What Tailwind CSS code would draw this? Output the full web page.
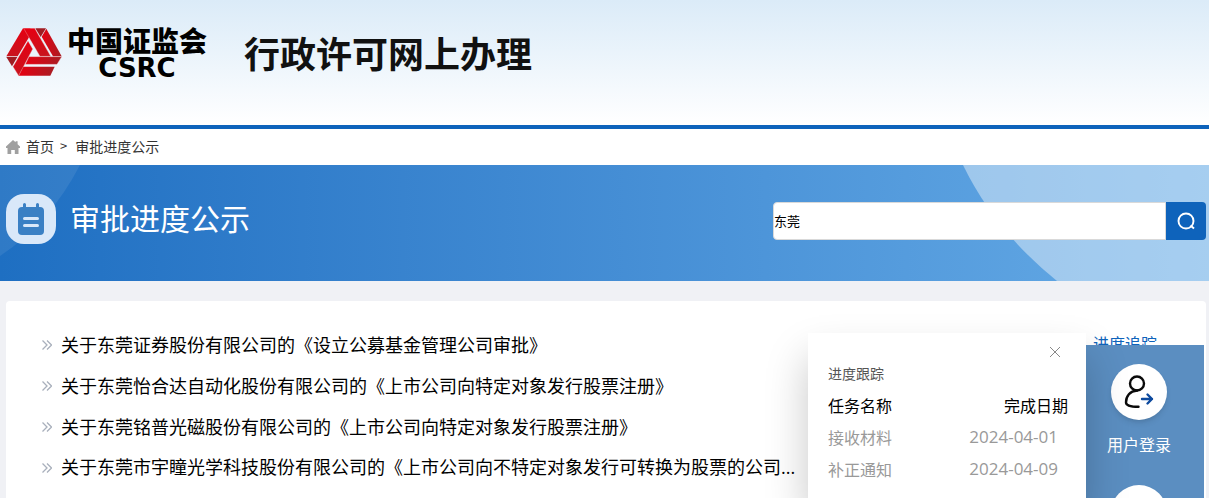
<!DOCTYPE html>
<html lang="zh-CN">
  <head>
    <meta charset="UTF-8" />
    <meta name="viewport" content="width=device-width, initial-scale=1.0" />
    <title>行政许可网上办理 - 审批进度公示</title>
    <script src="https://cdn.jsdelivr.net/npm/@tailwindcss/browser@4"></script>
  </head>
  <body class="flex h-screen flex-col overflow-hidden bg-[#f0f1f5] font-['Noto_Sans_CJK_SC',sans-serif] text-black">
    <header class="flex h-[129px] shrink-0 items-start border-b-4 border-[#0e63bb] bg-linear-to-b from-[#dbebf8] to-white pt-[22px] pl-1.5">
      <a href="#" class="flex items-center" aria-label="中国证监会 CSRC">
        <svg class="h-12 w-14" viewBox="18 36 168 144">
          <defs>
            <linearGradient id="g1" x1="0" y1="0" x2="0" y2="1">
              <stop offset="0" stop-color="#e60012" />
              <stop offset="1" stop-color="#c8141e" />
            </linearGradient>
            <linearGradient id="g2" x1="0" y1="0" x2="1" y2="0">
              <stop offset="0" stop-color="#e60012" />
              <stop offset="1" stop-color="#a81e24" />
            </linearGradient>
          </defs>
          <path d="M69 37h22v20L53 121H19z" fill="url(#g1)" />
          <path d="M19 123h33l-16 28z" fill="#a01c22" />
          <path d="M106 37h32l-16 26z" fill="#a01c22" />
          <path d="M139 38l46 83h-26L125 62z" fill="url(#g2)" />
          <path d="M71 37h33l48 84h-32z" fill="url(#g1)" stroke="#f3b9bd" />
          <path d="M69 152h95l-13 27H56z" fill="url(#g2)" />
          <path d="M87 122h98l-14 23H76z" fill="url(#g2)" stroke="#f3b9bd" />
          <path d="M84 75l14 24-42 80-17-27z" fill="url(#g1)" stroke="#f3b9bd" />
        </svg>
        <span class="ml-[5px] flex flex-col items-center pt-1">
          <span class="text-[28px] leading-7 font-black">中国证监会</span>
          <span class="font-['DejaVu_Sans'] text-[26px] leading-7 font-bold">CSRC</span>
        </span>
      </a>
      <h1 class="ml-[37px] pt-1.5 text-4xl leading-12 font-bold text-[#111]">行政许可网上办理</h1>
    </header>

    <nav class="flex h-9 shrink-0 items-center bg-white pb-0.5 pl-1.5 text-sm text-[#333]">
      <svg class="mt-0.5 mr-1.5 size-3.5" viewBox="0 0 14 14" fill="#a0a0a0">
        <path d="M7 0l2.600 2.300V1.200h2v3L14 6.600V8h-1.500v6H8.800v-4H5.200v4H1.500V8H0V6.600z" />
      </svg>
      <a href="#">首页</a>
      <span class="mr-2 ml-1.5 text-[13px]">&gt;</span>
      <a href="#">审批进度公示</a>
    </nav>

    <section class="relative flex h-[116px] shrink-0 items-center bg-linear-to-r from-[#1e6fc2] to-[#66abe6] pr-[3px] pb-1 pl-1.5">
      <div class="absolute inset-0 overflow-hidden">
        <svg class="absolute top-0 left-0 h-full w-20" viewBox="0 0 80 116">
          <path d="M0 0h80Q50 58 0 91z" fill="#fff" fill-opacity=".08" />
        </svg>
        <svg class="absolute top-0 right-0 h-full w-[246px]" viewBox="0 0 246 116">
          <path d="M0 0h246v116H94Q32 66 0 0z" fill="#fff" fill-opacity=".42" />
        </svg>
      </div>
      <div class="relative flex items-center gap-3.5 pb-1">
        <svg class="size-[50px]" viewBox="0 0 50 50">
          <rect width="50" height="50" rx="18" fill="#d9e8f9" />
          <rect x="12" y="13" width="26" height="28" rx="4" fill="#3a80c4" />
          <path d="M18.500 10.500v4M31.500 10.500v4" stroke="#3a80c4" stroke-width="3" stroke-linecap="round" />
          <path d="M18.500 24.500h13M18.500 31.500h13" stroke="#d9e8f9" stroke-width="3" stroke-linecap="round" />
        </svg>
        <h2 class="pb-1 text-[30px] leading-10 text-white">审批进度公示</h2>
      </div>
      <form class="relative ml-auto flex h-[38px]">
        <input type="text" value="东莞" aria-label="搜索" class="w-[393px] rounded-l border border-[#d9d9d9] bg-white text-[13px] outline-none" />
        <button type="button" aria-label="查询" class="flex w-10 items-center justify-center rounded-r bg-[#0e63bb]">
          <svg class="size-[18px]" viewBox="0 0 18 18" fill="none" stroke="#fff" stroke-width="1.900">
            <circle cx="9" cy="9" r="7.500" />
            <path d="M13.500 13.500l3.500 3" />
          </svg>
        </button>
      </form>
    </section>

    <main class="relative mt-5 mr-[3px] ml-1.5 flex-1 rounded-t bg-white pt-[22px] pl-9">
      <ul class="text-lg">
        <li class="flex h-[41px] items-center gap-[9px]">
          <svg class="mt-0.5 size-2.5" viewBox="0 0 10 10" fill="none" stroke="#a9b0bc" stroke-width="1.300"><path d="M.5.5L5 5 .5 9.500M5 .5L9.500 5 5 9.500" /></svg>
          <a href="#">关于东莞证券股份有限公司的《设立公募基金管理公司审批》</a>
        </li>
        <li class="flex h-[41px] items-center gap-[9px]">
          <svg class="mt-0.5 size-2.5" viewBox="0 0 10 10" fill="none" stroke="#a9b0bc" stroke-width="1.300"><path d="M.5.5L5 5 .5 9.500M5 .5L9.500 5 5 9.500" /></svg>
          <a href="#">关于东莞怡合达自动化股份有限公司的《上市公司向特定对象发行股票注册》</a>
        </li>
        <li class="flex h-[41px] items-center gap-[9px]">
          <svg class="mt-0.5 size-2.5" viewBox="0 0 10 10" fill="none" stroke="#a9b0bc" stroke-width="1.300"><path d="M.5.5L5 5 .5 9.500M5 .5L9.500 5 5 9.500" /></svg>
          <a href="#">关于东莞铭普光磁股份有限公司的《上市公司向特定对象发行股票注册》</a>
        </li>
        <li class="flex h-[41px] items-center gap-[9px]">
          <svg class="mt-0.5 size-2.5" viewBox="0 0 10 10" fill="none" stroke="#a9b0bc" stroke-width="1.300"><path d="M.5.5L5 5 .5 9.500M5 .5L9.500 5 5 9.500" /></svg>
          <a href="#">关于东莞市宇瞳光学科技股份有限公司的《上市公司向不特定对象发行可转换为股票的公司<span class="font-['Open_Sans']">...</span></a>
        </li>
      </ul>
      <a href="#" class="absolute top-[30px] right-[49px] text-base text-[#0e63bb]">进度追踪</a>

      <!-- side tools -->
      <aside class="absolute top-11 right-0.5 bottom-0 flex w-[130px] flex-col items-center overflow-hidden bg-[#5b8ec1] pt-[19px] text-base text-white">
        <a href="#" class="flex flex-col items-center">
          <span class="size-14 rounded-full bg-white shadow-md">
            <svg class="size-14" viewBox="0 0 56 56" fill="none" stroke-width="2.400" stroke-linecap="round" stroke-linejoin="round">
              <g stroke="#0a0a0a">
                <circle cx="26" cy="19.500" r="7" />
                <path d="M26 26.500C19 27 15 32 15 38.500c0 3.500 5 4.300 12.500 4.300" />
              </g>
              <path d="M31 35H41M36.500 30.500L41 35l-4.500 4.500" stroke="#0d4a9e" />
            </svg>
          </span>
          <span class="mt-3 leading-6">用户登录</span>
        </a>
        <span class="mt-[29px] size-14 shrink-0 rounded-full bg-white shadow-md"></span>
      </aside>

      <!-- progress popup -->
      <div role="dialog" aria-label="进度跟踪" class="absolute top-8 right-[120px] bottom-0 w-[278px] bg-white pr-[18px] pl-5 shadow-[0_24px_40px_rgba(0,0,0,0.22)]">
        <button type="button" aria-label="关闭" class="absolute top-[13px] right-[25px] text-[#888]">
          <svg class="size-3" viewBox="0 0 12 12" fill="none" stroke="currentColor"><path d="M1 1l10 10M11 1L1 11" /></svg>
        </button>
        <div class="pt-[30px] text-sm text-[#555]">进度跟踪</div>
        <table class="mt-1.5 w-full text-base">
          <thead>
            <tr class="h-8">
              <th class="p-0 text-left font-normal">任务名称</th>
              <th class="p-0 text-right font-normal">完成日期</th>
            </tr>
          </thead>
          <tbody class="text-[#999]">
            <tr class="h-8">
              <td class="p-0">接收材料</td>
              <td class="p-0 pr-2.5 text-right font-['Open_Sans'] text-[17px]">2024-04-01</td>
            </tr>
            <tr class="h-8">
              <td class="p-0">补正通知</td>
              <td class="p-0 pr-2.5 text-right font-['Open_Sans'] text-[17px]">2024-04-09</td>
            </tr>
          </tbody>
        </table>
      </div>
    </main>
  </body>
</html>
